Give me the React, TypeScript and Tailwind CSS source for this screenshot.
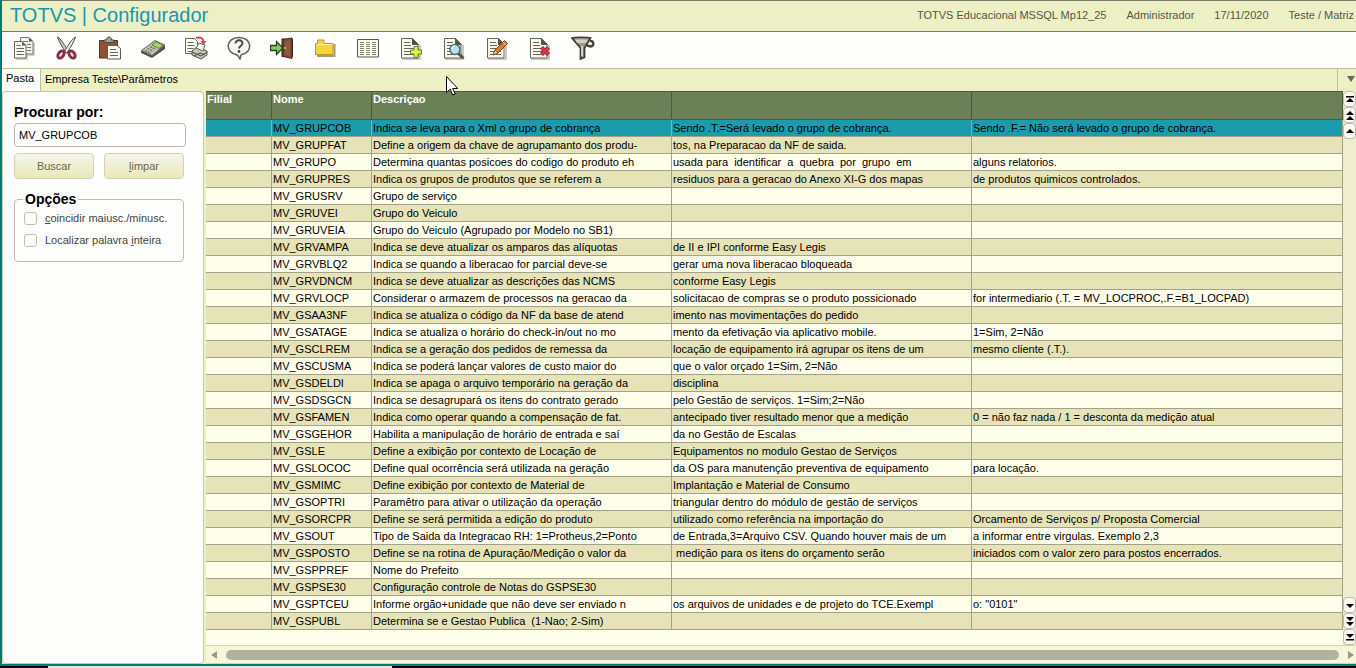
import { useState, type ReactNode } from 'react'

type Row = [string, string, string, string]

const rows: Row[] = [
  ['MV_GRUPCOB', 'Indica se leva para o Xml o grupo de cobrança', 'Sendo .T.=Será levado o grupo de cobrança.', 'Sendo .F.= Não será levado o grupo de cobrança.'],
  ['MV_GRUPFAT', 'Define a origem da chave de agrupamanto dos produ-', 'tos, na Preparacao da NF de saida.', ''],
  ['MV_GRUPO', 'Determina quantas posicoes do codigo do produto eh', 'usada para  identificar  a  quebra  por  grupo  em', 'alguns relatorios.'],
  ['MV_GRUPRES', 'Indica os grupos de produtos que se referem a', 'residuos para a geracao do Anexo XI-G dos mapas', 'de produtos quimicos controlados.'],
  ['MV_GRUSRV', 'Grupo de serviço', '', ''],
  ['MV_GRUVEI', 'Grupo do Veiculo', '', ''],
  ['MV_GRUVEIA', 'Grupo do Veiculo (Agrupado por Modelo no SB1)', '', ''],
  ['MV_GRVAMPA', 'Indica se deve atualizar os amparos das alíquotas', 'de II e IPI conforme Easy Legis', ''],
  ['MV_GRVBLQ2', 'Indica se quando a liberacao for parcial deve-se', 'gerar uma nova liberacao bloqueada', ''],
  ['MV_GRVDNCM', 'Indica se deve atualizar as descrições das NCMS', 'conforme Easy Legis', ''],
  ['MV_GRVLOCP', 'Considerar o armazem de processos na geracao da', 'solicitacao de compras se o produto possicionado', 'for intermediario (.T. = MV_LOCPROC,.F.=B1_LOCPAD)'],
  ['MV_GSAA3NF', 'Indica se atualiza o código da NF da base de atend', 'imento nas movimentações do pedido', ''],
  ['MV_GSATAGE', 'Indica se atualiza o horário do check-in/out no mo', 'mento da efetivação via aplicativo mobile.', '1=Sim, 2=Não'],
  ['MV_GSCLREM', 'Indica se a geração dos pedidos de remessa da', 'locação de equipamento irá agrupar os itens de um', 'mesmo cliente (.T.).'],
  ['MV_GSCUSMA', 'Indica se poderá lançar valores de custo maior do', 'que o valor orçado 1=Sim, 2=Não', ''],
  ['MV_GSDELDI', 'Indica se apaga o arquivo temporário na geração da', 'disciplina', ''],
  ['MV_GSDSGCN', 'Indica se desagrupará os itens do contrato gerado', 'pelo Gestão de serviços. 1=Sim;2=Não', ''],
  ['MV_GSFAMEN', 'Indica como operar quando a compensação de fat.', 'antecipado tiver resultado menor que a medição', '0 = não faz nada / 1 = desconta da medição atual'],
  ['MV_GSGEHOR', 'Habilita a manipulação de horário de entrada e saí', 'da no Gestão de Escalas', ''],
  ['MV_GSLE', 'Define a exibição por contexto de Locação de', 'Equipamentos no modulo Gestao de Serviços', ''],
  ['MV_GSLOCOC', 'Define qual ocorrência será utilizada na geração', 'da OS para manutenção preventiva de equipamento', 'para locação.'],
  ['MV_GSMIMC', 'Define exibição por contexto de Material de', 'Implantação e Material de Consumo', ''],
  ['MV_GSOPTRI', 'Paramêtro para ativar o utilização da operação', 'triangular dentro do módulo de gestão de serviços', ''],
  ['MV_GSORCPR', 'Define se será permitida a edição do produto', 'utilizado como referência na importação do', 'Orcamento de Serviços p/ Proposta Comercial'],
  ['MV_GSOUT', 'Tipo de Saida da Integracao RH: 1=Protheus,2=Ponto', 'de Entrada,3=Arquivo CSV. Quando houver mais de um', 'a informar entre virgulas. Exemplo 2,3'],
  ['MV_GSPOSTO', 'Define se na rotina de Apuração/Medição o valor da', ' medição para os itens do orçamento serão', 'iniciados com o valor zero para postos encerrados.'],
  ['MV_GSPPREF', 'Nome do Prefeito', '', ''],
  ['MV_GSPSE30', 'Configuração controle de Notas do GSPSE30', '', ''],
  ['MV_GSPTCEU', 'Informe orgão+unidade que não deve ser enviado n', 'os arquivos de unidades e de projeto do TCE.Exempl', 'o: "0101"'],
  ['MV_GSPUBL', 'Determina se e Gestao Publica  (1-Nao; 2-Sim)', '', ''],
]

// page with a folded corner, shared by the document icons
function Sheet() {
  return (
    <>
      <path d="M3 23h18V9" fill="none" stroke="#b9b9b0" strokeWidth="1.5" />
      <path d="M2.5 2.5h11l5.5 6v13.500h-16.500z" fill="#f7f7ec" stroke="#66665a" />
      <path d="M13.500 2.500v6h6z" fill="#55554c" stroke="#55554c" />
      <path d="M5 6.500h6M5 9.500h7M5 12.500h11M5 15.500h11M5 18.500h11" stroke="#66665a" />
    </>
  )
}

const tools: { label: string; icon: ReactNode }[] = [
  {
    label: 'Copiar',
    icon: (
      <>
        <path d="M4 23h11v-4h7V7" fill="none" stroke="#c4c4b8" strokeWidth="1.500" />
        <path d="M8.500 1.500h8.500l4 4v12.500h-12.500z" fill="#f3f3ef" stroke="#77776c" />
        <path d="M17 1.500v4h4z" fill="#55554c" />
        <path d="M11 5.500h5M15 8.500h4M15 11.500h4M15 14.500h4" stroke="#77776c" />
        <path d="M2.500 5.500h7.500l4 4v12.500h-11.500z" fill="#fafaf5" stroke="#66665a" />
        <path d="M10 5.500v4h4z" fill="#55554c" />
        <path d="M4.500 9.500h4M4.500 12.500h7.500M4.500 15.500h7.500M4.500 18.500h7.500" stroke="#66665a" />
      </>
    ),
  },
  {
    label: 'Recortar',
    icon: (
      <>
        <path d="M2.500 1c3 1 9 11 11 14.500l-2.500 1.500C7.500 11 3.500 5 2.500 1z" fill="#c9c9be" stroke="#4b4b42" />
        <path d="M20.500 1c-3 1-8.500 10-11 14.500l2.500 1.500C15.500 11 19.500 5 20.500 1z" fill="#eeeee6" stroke="#4b4b42" />
        <ellipse cx="6" cy="18.500" rx="2.600" ry="4" transform="rotate(35 6 18.500)" fill="#f4e4e6" stroke="#85304a" strokeWidth="3" />
        <ellipse cx="17" cy="18.500" rx="2.600" ry="4" transform="rotate(-35 17 18.500)" fill="#f4e4e6" stroke="#85304a" strokeWidth="3" />
      </>
    ),
  },
  {
    label: 'Colar',
    icon: (
      <>
        <path d="M1.500 4.500h18v17.500h-18z" fill="#8f5232" stroke="#5b3320" />
        <path d="M6 6.500V4h2.500c0-4 5-4 5 0H16v2.500z" fill="#a3a08e" stroke="#4a463b" />
        <path d="M9.500 9.500h9.500l3.500 3v10.500h-13z" fill="#fbfbf4" stroke="#5d5d52" />
        <path d="M12 13.500h6M12 16.500h8M12 19.500h8" stroke="#66665a" />
      </>
    ),
  },
  {
    label: 'Calculadora',
    icon: (
      <>
        <path d="M0 15L14 5l10 4v4L11 22 0 17z" fill="#55564b" />
        <path d="M.5 14.500L14 4.500l9.500 4.500L11 19.500z" fill="#c3c6b2" stroke="#66675b" />
        <path d="M11 9l4-3.200 7 3.200-4 3.500z" fill="#a5d468" stroke="#66803f" />
        <path d="M4 14.500l6 2.700M6.500 12.500l6 2.700M9 10.700l6 2.500" stroke="#66675a" strokeWidth="1.300" strokeDasharray="2 1" />
      </>
    ),
  },
  {
    label: 'Imprimir',
    icon: (
      <>
        <path d="M1.500 2.500h9l3 3v12h-12z" fill="#fafaf3" stroke="#66665a" />
        <path d="M3.500 6.500h6M3.500 9.500h7M3.500 12.500h6M3.500 15.500h5" stroke="#66665a" />
        <path d="M12 2c4-1.500 7 0 7.500 3.500" fill="none" stroke="#d34855" strokeWidth="2" />
        <path d="M16.500 5h6l-3 4z" fill="#d34855" />
        <path d="M8 15l5-4 10 4v4l-6 4-9-4z" fill="#c7c7bd" stroke="#515148" />
        <path d="M12 12l3-5 6 2-2 6z" fill="#f5f5ee" stroke="#66665c" />
        <path d="M8 16l9 4 6-4M10 20l6-3 5 2" fill="none" stroke="#44443b" />
      </>
    ),
  },
  {
    label: 'Ajuda',
    icon: (
      <>
        <path d="M14.500 18.500C26 17 25.500 1.500 12 1.500S-2 16.500 9 18.500c1.500.5 3 2 4 4.500.7-1.500.5-3.500 1.500-4.500z" fill="#f8f8f2" stroke="#5e5e55" strokeWidth="1.500" />
        <path d="M8.500 7.500c0-4.500 7.500-4 7 0-.3 2.500-3.500 2.500-3.500 5" fill="none" stroke="#48483f" strokeWidth="2" />
        <circle cx="12" cy="15.500" r="1.400" fill="#48483f" />
      </>
    ),
  },
  {
    label: 'Sair',
    icon: (
      <>
        <path d="M11.500 2.500h11.500v18.500h-11.500z" fill="#3d2a20" />
        <path d="M13 3.500l9-1.500v20.500l-9-2z" fill="#7c4c33" stroke="#4c2f20" />
        <path d="M15 5.500l5-.7v15l-5-1z" fill="#8c5a3c" />
        <circle cx="15" cy="12" r="1" fill="#d8c18b" />
        <path d="M0.500 9.500h6V5.500l6.500 6.500-6.500 6.500v-4h-6z" fill="#86c95c" stroke="#26401b" strokeWidth="1.300" />
      </>
    ),
  },
  {
    label: 'Abrir pasta',
    icon: (
      <>
        <path d="M21.500 8v12H4" fill="none" stroke="#a59b79" strokeWidth="2" />
        <path d="M2.500 18.500v-11h2v-3.500h6.500v3.500h9v11z" fill="#f8d536" stroke="#c39222" />
        <path d="M3.500 8.500h16" stroke="#fff2a0" />
      </>
    ),
  },
  {
    label: 'Visualizar grade',
    icon: (
      <>
        <path d="M1.500 3.500h21v17.500h-21z" fill="#fbfbe6" stroke="#55554a" />
        <path d="M4 6.500h4m2 0h4m2 0h4M4 8.500h4m2 0h4m2 0h4M4 10.500h4m2 0h4m2 0h4M4 12.500h4m2 0h4m2 0h4M4 14.500h4m2 0h4m2 0h4M4 16.500h4m2 0h4m2 0h4M4 18.500h4m2 0h4m2 0h4" stroke="#85857a" />
      </>
    ),
  },
  {
    label: 'Incluir',
    icon: (
      <>
        <Sheet />
        <path d="M15 10.500h4v3.500h3.500v4H19v3.500h-4V18h-3.500v-4H15z" fill="#e3f04c" stroke="#66802a" />
      </>
    ),
  },
  {
    label: 'Pesquisar',
    icon: (
      <>
        <Sheet />
        <path d="M16.500 17.500l5 5" stroke="#55544e" strokeWidth="3" />
        <circle cx="13" cy="13.500" r="5" fill="#b9dfe7" stroke="#4b6c77" strokeWidth="1.500" />
        <path d="M10 13c0-2 1.500-3 3-3" fill="none" stroke="#fff" strokeWidth="1.300" />
      </>
    ),
  },
  {
    label: 'Alterar',
    icon: (
      <>
        <Sheet />
        <path d="M8 19l2-5L19.500 4.500l3 3L13 17z" fill="#d77a36" stroke="#873f1a" />
        <path d="M8 19l2-5 3 3z" fill="#f0d6a6" stroke="#6b4a27" strokeWidth=".7" />
        <path d="M18 6l3 3" stroke="#f3c08b" />
      </>
    ),
  },
  {
    label: 'Excluir',
    icon: (
      <>
        <Sheet />
        <path d="M13.500 11.500l7 7M20.500 11.500l-7 7" stroke="#8f2030" strokeWidth="4" />
        <path d="M13.500 11.500l7 7M20.500 11.500l-7 7" stroke="#d9374b" strokeWidth="2.500" />
      </>
    ),
  },
  {
    label: 'Filtrar',
    icon: (
      <>
        <path d="M19 5c4-.5 4.500 5 .5 5.500l-3.500-1" fill="none" stroke="#44443d" strokeWidth="2.500" />
        <path d="M1 2c3-1 15-1 18.500 0L13.500 12v9.500l-4 1.500V12z" fill="#99988b" stroke="#3c3c35" strokeWidth="1.700" />
        <path d="M4 3.500h13l-2 3.500H6z" fill="#cfceC0" />
        <path d="M11 10v10" stroke="#ecebe0" strokeWidth="1.500" />
      </>
    ),
  },
]

const scrollUp = [
  { label: 'Início', path: 'M3 3h8v1.500H3zM7 5l4 4H3z' },
  { label: 'Página anterior', path: 'M7 2l4 4H3zM7 7l4 4H3z' },
  { label: 'Linha anterior', path: 'M7 4l4 4H3z' },
]

const scrollDown = [
  { label: 'Próxima linha', path: 'M3 5h8L7 9z' },
  { label: 'Próxima página', path: 'M3 2h8L7 6zM3 7h8l-4 4z' },
  { label: 'Fim', path: 'M3 3h8L7 7zM3 8h8v1.500H3z' },
]

function ScrollButton({ label, path }: { label: string; path: string }) {
  return (
    <button type="button" aria-label={label} className="flex h-4 w-full items-center justify-center overflow-hidden rounded-sm border border-[#bdbdae] bg-[#f8f8ee]">
      <svg viewBox="0 0 14 13" className="h-[13px] w-[14px] shrink-0">
        <path d={path} fill="#000" />
      </svg>
    </button>
  )
}

function Toolbar() {
  return (
    <nav aria-label="Ferramentas" className="flex h-9 shrink-0 items-start bg-[#fdfdfb] pt-1">
      {tools.map(tool => (
        <button key={tool.label} type="button" aria-label={tool.label} className="flex w-[43px] justify-center">
          <svg viewBox="0 0 24 24" className="h-6 w-6" fill="none">{tool.icon}</svg>
        </button>
      ))}
    </nav>
  )
}

function SearchPanel() {
  const [term, setTerm] = useState('MV_GRUPCOB')

  return (
    <aside className="w-[202px] shrink-0 rounded-sm border border-[#c5c5b4] bg-[#fdfdfb] px-[11px] pt-2">
      <label htmlFor="term" className="block h-[23px] text-sm font-bold leading-6 text-black">Procurar por:</label>
      <input
        id="term"
        type="text"
        value={term}
        onChange={e => setTerm(e.target.value)}
        className="block h-6 w-[172px] rounded-sm border border-[#b9b9b4] bg-white px-1 text-[11px] text-black outline-none"
      />
      <div className="mt-1.5 flex gap-2.5">
        <button type="button" className="h-[26px] w-20 rounded-sm border border-[#d2d2bc] bg-linear-to-b from-[#f6f6ea] to-[#eae8b8] text-[11px] text-[#666658]">Buscar</button>
        <button type="button" className="h-[26px] w-20 rounded-sm border border-[#d2d2bc] bg-linear-to-b from-[#f6f6ea] to-[#eae8b8] text-[11px] text-[#666658]"><u>l</u>impar</button>
      </div>
      <fieldset className="mt-3 h-[71px] w-[170px] rounded-sm border border-[#bdbdb0] px-2">
        <legend className="px-0.5 text-sm font-bold leading-4 text-black">Opções</legend>
        <label className="flex h-[22px] items-center gap-2 pl-px text-[11px] text-[#44443c]">
          <input type="checkbox" className="size-[13px] appearance-none rounded-[3px] border border-[#c2c2a4] bg-white checked:bg-[#159ab4]" />
          <span><u>c</u>oincidir maiusc./minusc.</span>
        </label>
        <label className="flex h-[22px] items-center gap-2 pl-px text-[11px] text-[#44443c]">
          <input type="checkbox" className="size-[13px] appearance-none rounded-[3px] border border-[#c2c2a4] bg-white checked:bg-[#159ab4]" />
          <span>Localizar palavra <u>i</u>nteira</span>
        </label>
      </fieldset>
    </aside>
  )
}

function ParameterTable() {
  const [selected, setSelected] = useState(0)

  return (
    <table className="w-full table-fixed border-separate border-spacing-0 text-[11px] text-black">
      <colgroup>
        <col className="w-[66px]" />
        <col className="w-[100px]" />
        <col className="w-[300px]" />
        <col className="w-[300px]" />
        <col />
      </colgroup>
      <thead>
        <tr className="h-[29px] bg-[#6c8058] text-left align-top text-white">
          {['Filial', 'Nome', 'Descriçao', '', ''].map((title, i) => (
            <th key={i} className="border-r border-b border-t border-[#4b5a3c] px-px py-0 leading-[14px] font-bold">{title}</th>
          ))}
        </tr>
      </thead>
      <tbody>
        {rows.map((row, i) => (
          <tr
            key={row[0]}
            onClick={() => setSelected(i)}
            className={i === selected ? 'bg-[#1a9cac]' : i % 2 ? 'bg-[#e6e3b8]' : 'bg-[#fdfdea]'}
          >
            {['', ...row].map((text, j) => (
              <td key={j} className="h-[17px] overflow-hidden border-r border-b border-[#a2a28c] p-0 pl-px leading-4 whitespace-pre">{text}</td>
            ))}
          </tr>
        ))}
      </tbody>
    </table>
  )
}

export default function App() {
  return (
    <div className="relative flex h-screen flex-col overflow-hidden bg-[#ecf0c4] font-['Liberation_Sans',Arial,sans-serif]">
      <div className="flex min-h-0 flex-1 flex-col border-b-2 border-l-2 border-[#087979]">
        <header className="flex h-8 shrink-0 items-center justify-between border-t border-b border-t-[#77776a] border-b-[#77776a] bg-[#ecf0c4] pb-0.5 pl-2">
          <h1 className="text-xl text-[#1995b0]">TOTVS | Configurador</h1>
          <ul className="flex items-center gap-5 pr-0.5 text-[11px] text-[#55564a]">
            <li>TOTVS Educacional MSSQL Mp12_25</li>
            <li>Administrador</li>
            <li>17/11/2020</li>
            <li>Teste / Matriz</li>
          </ul>
        </header>

        <Toolbar />

        <div className="flex h-[23px] shrink-0 border-t border-[#bcc198] text-[11px] text-black">
          <button type="button" className="h-full w-[39px] border-r border-[#bcc198] bg-[#fdfdfb] pb-1 pl-1 text-left">Pasta</button>
          <button type="button" className="h-full flex-1 px-1 pb-0.5 text-left">Empresa Teste\Parâmetros</button>
          <button type="button" aria-label="Mais pastas" className="flex h-full w-[19px] items-center justify-end border-l border-[#bcc198] pr-px pb-0.5">
            <svg viewBox="0 0 8 6" className="h-1.5 w-2"><path d="M0 0h8L4 6z" fill="#66685c" /></svg>
          </button>
        </div>

        <main className="flex min-h-0 flex-1 gap-0.5">
          <SearchPanel />
          <section className="flex min-w-0 flex-1 flex-col bg-[#fdfdea]">
            <div className="flex min-h-0 flex-1">
              <div className="min-w-0 flex-1 overflow-hidden">
                <ParameterTable />
              </div>
              <div className="flex w-[13px] shrink-0 flex-col justify-between bg-[#efedcf]">
                <div className="flex flex-col">{scrollUp.map(b => <ScrollButton key={b.label} {...b} />)}</div>
                <div className="flex flex-col">{scrollDown.map(b => <ScrollButton key={b.label} {...b} />)}</div>
              </div>
            </div>
            <div className="flex h-[19px] shrink-0 items-center gap-2 border-t border-b border-[#d4d3b4] bg-[#f7f6da] pr-px pl-1">
              <svg viewBox="0 0 8 8" className="size-2"><path d="M7 0v8L1 4z" fill="#99998a" /></svg>
              <div className="h-2.5 flex-1 rounded-full bg-[#b2b2a2]" />
              <svg viewBox="0 0 8 8" className="size-2"><path d="M1 0v8l6-4z" fill="#99998a" /></svg>
            </div>
          </section>
        </main>
      </div>
      <div className="flex h-0.5 shrink-0">
        <div className="w-12 bg-black" />
        <div className="w-[344px] bg-[#e4e7d5]" />
        <div className="flex-1 bg-black" />
      </div>

      {/* mouse pointer */}
      <svg viewBox="0 0 12 20" className="pointer-events-none absolute top-[76px] left-[446px] h-5 w-3">
        <path d="M.5.500v16l3.700-3.500 2.500 6 2.500-1-2.500-5.500h5z" fill="#fff" stroke="#000" />
      </svg>
    </div>
  )
}
